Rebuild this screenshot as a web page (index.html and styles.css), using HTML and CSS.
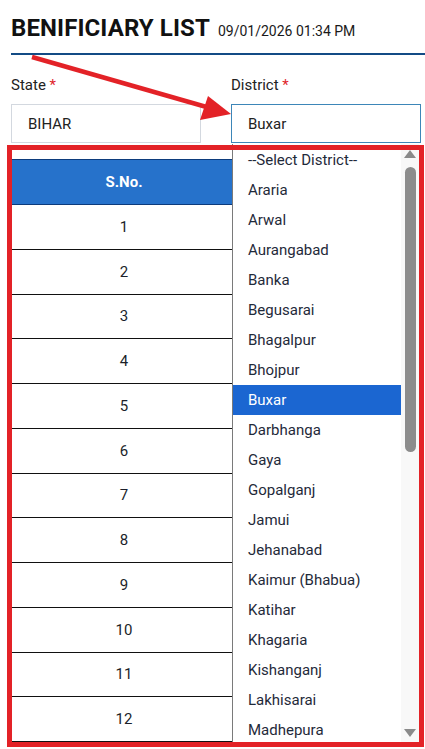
FILE: index.html
```html
<!DOCTYPE html>
<html lang="en">
<head>
<meta charset="utf-8">
<title>Beneficiary List</title>
<link rel="stylesheet" href="styles.css">
</head>
<body>
<div class="page">
  <header class="title-row">
    <h1 class="title">BENIFICIARY LIST</h1>
    <span class="stamp">09/01/2026 01:34 PM</span>
  </header>
  <div class="rule"></div>

  <div class="filters">
    <div class="field">
      <label class="label">State <span class="req">*</span></label>
      <div class="input">BIHAR</div>
    </div>
    <div class="field field-district">
      <label class="label">District <span class="req">*</span></label>
      <div class="input input-active">Buxar</div>
      <div class="listbox">
        <ul class="options">
          <li>--Select District--</li>
          <li>Araria</li>
          <li>Arwal</li>
          <li>Aurangabad</li>
          <li>Banka</li>
          <li>Begusarai</li>
          <li>Bhagalpur</li>
          <li>Bhojpur</li>
          <li class="selected">Buxar</li>
          <li>Darbhanga</li>
          <li>Gaya</li>
          <li>Gopalganj</li>
          <li>Jamui</li>
          <li>Jehanabad</li>
          <li>Kaimur (Bhabua)</li>
          <li>Katihar</li>
          <li>Khagaria</li>
          <li>Kishanganj</li>
          <li>Lakhisarai</li>
          <li>Madhepura</li>
        </ul>
        <div class="scrollbar">
          <span class="arrow-up"></span>
          <span class="thumb"></span>
          <span class="arrow-down"></span>
        </div>
      </div>
    </div>
  </div>

  <table class="grid">
    <thead>
      <tr><th class="col-sno">S.No.</th><th></th></tr>
    </thead>
    <tbody>
      <tr><td>1</td><td></td></tr>
      <tr><td>2</td><td></td></tr>
      <tr><td>3</td><td></td></tr>
      <tr><td>4</td><td></td></tr>
      <tr><td>5</td><td></td></tr>
      <tr><td>6</td><td></td></tr>
      <tr><td>7</td><td></td></tr>
      <tr><td>8</td><td></td></tr>
      <tr><td>9</td><td></td></tr>
      <tr><td>10</td><td></td></tr>
      <tr><td>11</td><td></td></tr>
      <tr><td>12</td><td></td></tr>
    </tbody>
  </table>
</div>

<div class="annot-box"></div>
<svg class="annot-arrow" width="425" height="140" viewBox="0 0 425 140">
  <line x1="32" y1="57" x2="210" y2="108" stroke="#e32227" stroke-width="4.5"/>
  <polygon points="231,114 200,120 208,96" fill="#e32227"/>
</svg>
</body>
</html>
```

FILE: styles.css
```css
* { box-sizing: border-box; }

html, body {
  margin: 0;
  padding: 0;
  background: #ffffff;
}

body {
  font-family: Roboto, "Liberation Sans", Arial, sans-serif;
  color: #1f2329;
  width: 425px;
  height: 749px;
  overflow: hidden;
  position: relative;
}

.page {
  padding: 14px 0 0 11px;
}

.title-row {
  display: flex;
  align-items: baseline;
  gap: 8px;
  height: 28px;
}

.title {
  margin: 0;
  font-size: 24px;
  line-height: 28px;
  font-weight: 700;
  color: #111111;
  letter-spacing: 0.1px;
}

.stamp {
  font-size: 14px;
  color: #1a1a1a;
}

.rule {
  margin-top: 11px;
  height: 2px;
  background: #134b85;
  width: 414px;
}

.filters {
  display: grid;
  grid-template-columns: 190px 190px;
  column-gap: 30px;
  margin-top: 21px;
}

.field {
  display: flex;
  flex-direction: column;
  gap: 10px;
}

.field-district {
  position: relative;
}

.label {
  font-size: 15px;
  line-height: 18px;
  color: #222222;
}

.req {
  color: #e0242b;
}

.input {
  height: 39px;
  border: 1px solid #d3d8df;
  display: flex;
  align-items: center;
  padding-left: 16px;
  font-size: 15px;
  color: #222222;
}

.input-active {
  border-color: #3d86b8;
}

/* dropdown popup */
.listbox {
  position: absolute;
  left: 1px;
  top: 68px;
  width: 187px;
  height: 600px;
  background: #ffffff;
  border-left: 1px solid #7a7a7a;
  display: flex;
  z-index: 5;
}

.options {
  list-style: none;
  margin: 0;
  padding: 1px 0 0 0;
  width: 169px;
}

.options li {
  height: 30px;
  display: flex;
  align-items: center;
  padding-left: 15px;
  font-size: 15px;
  color: #1f2a3a;
  white-space: nowrap;
}

.options li.selected {
  background: #1b66d1;
  color: #ffffff;
}

.scrollbar {
  width: 18px;
  background: #f8f8f8;
  position: relative;
  display: flex;
  flex-direction: column;
  align-items: center;
}

.arrow-up {
  margin-top: 6px;
  width: 0;
  height: 0;
  border-left: 6px solid transparent;
  border-right: 6px solid transparent;
  border-bottom: 8px solid #8a8a8a;
}

.thumb {
  margin-top: 9px;
  width: 11px;
  height: 285px;
  border-radius: 6px;
  background: #8c8c8c;
}

.arrow-down {
  margin-top: auto;
  margin-bottom: 7px;
  width: 0;
  height: 0;
  border-left: 6px solid transparent;
  border-right: 6px solid transparent;
  border-top: 8px solid #8a8a8a;
}

/* table */
.grid {
  margin-top: 16px;
  margin-left: 1px;
  width: 407px;
  border-collapse: collapse;
  table-layout: fixed;
}

.grid th {
  height: 45px;
  background: #2672cb;
  color: #ffffff;
  font-size: 15px;
  font-weight: 700;
  border-top: 1px solid #0c3b7c;
  border-bottom: 1px solid #0c3b7c;
  padding: 0 0 0 4px;
}

.col-sno {
  width: 220px;
}

.grid td {
  height: 44.75px;
  text-align: center;
  font-size: 15px;
  color: #1b1f2a;
  border-bottom: 1px solid #111111;
  padding: 0 0 0 4px;
}

/* annotations */
.annot-box {
  position: absolute;
  left: 7px;
  top: 145px;
  width: 417px;
  height: 602px;
  border: 5px solid #e32227;
  z-index: 10;
  pointer-events: none;
}

.annot-arrow {
  position: absolute;
  left: 0;
  top: 0;
  z-index: 11;
}
```
